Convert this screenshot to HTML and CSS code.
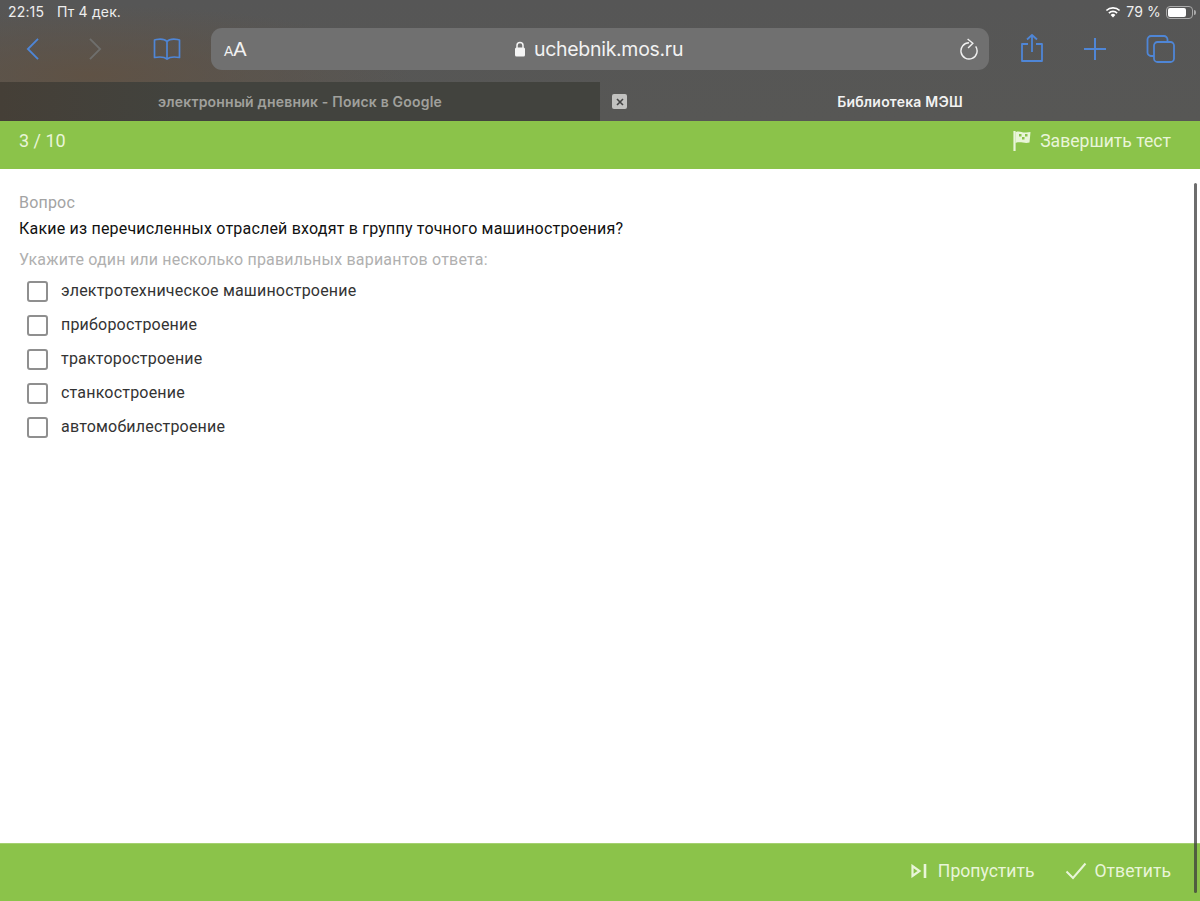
FILE: index.html
```html
<!DOCTYPE html>
<html lang="ru">
<head>
<meta charset="utf-8">
<title>Библиотека МЭШ</title>
<link rel="stylesheet" href="styles.css">
</head>
<body>
<header class="chrome">
  <div class="status">
    <div class="status-left"><span>22:15</span><span>Пт 4 дек.</span></div>
    <div class="status-right">
      <svg class="wifi" viewBox="0 0 16 12"><path d="M8 11.5 5.6 8.9a3.4 3.4 0 0 1 4.8 0z" fill="#fff"/><path d="M3.9 7.1a5.8 5.8 0 0 1 8.2 0M1.4 4.5a9.4 9.4 0 0 1 13.2 0" fill="none" stroke="#fff" stroke-width="1.7"/></svg>
      <span>79 %</span>
      <span class="battery"><span class="battery-fill"></span></span>
      <span class="battery-tip"></span>
    </div>
  </div>
  <div class="toolbar">
    <div class="nav-group">
      <svg class="ic back" viewBox="0 0 16 26"><path d="M14 2 3 13l11 11" fill="none" stroke="#4f86d6" stroke-width="2"/></svg>
      <svg class="ic forward" viewBox="0 0 16 26"><path d="M2 2l11 11L2 24" fill="none" stroke="#6f6f6d" stroke-width="2"/></svg>
      <svg class="ic book" viewBox="0 0 28 24"><path d="M14 4.5C12 2.3 8 1.8 3.5 2.5L1.500 3v17.500c5-.8 10-.6 12.500 1.500 2.500-2.100 7.500-2.300 12.500-1.500V3l-2-.5C20 1.800 16 2.300 14 4.500zm0 0V22" fill="none" stroke="#4f86d6" stroke-width="1.700" stroke-linejoin="round"/></svg>
    </div>
    <div class="address">
      <span class="aa"><small>A</small>A</span>
      <span class="url">
        <svg class="lock" viewBox="0 0 12 16"><path d="M3 7V4.500a3 3 0 0 1 6 0V7" fill="none" stroke="#f4f4f4" stroke-width="1.500"/><rect x="1" y="6.500" width="10" height="9" rx="1.500" fill="#f4f4f4"/></svg>
        uchebnik.mos.ru
      </span>
      <svg class="reload" viewBox="0 0 20 24"><path d="M9.500 5.500A8.500 8.500 0 1 0 16.500 9.200" fill="none" stroke="#f0f0f0" stroke-width="1.500"/><path d="M8 1.500 13.500 6 8.500 11" fill="none" stroke="#f0f0f0" stroke-width="1.500"/></svg>
    </div>
    <div class="action-group">
      <svg class="ic share" viewBox="0 0 24 30"><path d="M8 11H2v17h20V11h-6M12 19V2M7 6.500 12 2l5 4.500" fill="none" stroke="#4f86d6" stroke-width="1.800" stroke-linejoin="round"/></svg>
      <svg class="ic plus" viewBox="0 0 22 22"><path d="M11 0v22M0 11h22" stroke="#4f86d6" stroke-width="2"/></svg>
      <svg class="ic tabs" viewBox="0 0 29 28"><rect x="8" y="7" width="20" height="20" rx="3.500" fill="none" stroke="#4f86d6" stroke-width="1.800"/><path d="M8 21H5a3.500 3.500 0 0 1-3.500-3.500v-13A3.500 3.500 0 0 1 5 1h13a3.500 3.500 0 0 1 3.500 3.500V7" fill="none" stroke="#4f86d6" stroke-width="1.800"/></svg>
    </div>
  </div>
  <div class="tabstrip">
    <div class="tab tab-off">электронный дневник - Поиск в Google</div>
    <div class="tab tab-on">
      <span class="close"><svg viewBox="0 0 8 8"><path d="M1 1l6 6M7 1 1 7" stroke="#444" stroke-width="1.600"/></svg></span>
      Библиотека МЭШ
    </div>
  </div>
</header>
<div class="page-bar">
  <span>3 / 10</span>
  <span class="bar-btn">
    <svg class="flag" viewBox="0 0 18 22"><path d="M1.500 1v20" stroke="#e9f5d9" stroke-width="2.200"/><path d="M2.500 2c5-1.500 6 1 10.500.5l4.500-.5-1 10.500c-5 1.500-9-1.500-14 .5z" fill="#e9f5d9"/><path d="M6 4h2.500v2.500H6zM12 4h2.500v2.500H12zM9 7h2.500v2.500H9z" fill="#8bc34a"/></svg>
    Завершить тест
  </span>
</div>
<main class="content">
  <div class="hint-top">Вопрос</div>
  <div class="question">Какие из перечисленных отраслей входят в группу точного машиностроения?</div>
  <div class="hint">Укажите один или несколько правильных вариантов ответа:</div>
  <ul class="options">
    <li><span class="box"></span>электротехническое машиностроение</li>
    <li><span class="box"></span>приборостроение</li>
    <li><span class="box"></span>тракторостроение</li>
    <li><span class="box"></span>станкостроение</li>
    <li><span class="box"></span>автомобилестроение</li>
  </ul>
  <div class="scrollbar"></div>
</main>
<footer class="page-foot">
  <span class="bar-btn">
    <svg class="skip" viewBox="0 0 16 14"><path d="M1.500 2v10l7-5z" fill="none" stroke="#e9f5d9" stroke-width="2.200"/><path d="M14 0v14" stroke="#e9f5d9" stroke-width="2.600"/></svg>
    Пропустить
  </span>
  <span class="bar-btn">
    <svg class="check" viewBox="0 0 22 18"><path d="M1.500 9.500 8 16 20.500 1.500" fill="none" stroke="#e9f5d9" stroke-width="2"/></svg>
    Ответить
  </span>
</footer>
</body>
</html>
```

FILE: styles.css
```css
* { box-sizing: border-box; }
html, body { margin: 0; height: 100%; }
body {
  width: 1200px;
  height: 901px;
  overflow: hidden;
  display: flex;
  flex-direction: column;
  background: #fff;
  font-family: Roboto, "Liberation Sans", sans-serif;
}
.chrome {
  height: 121px;
  background: radial-gradient(ellipse 320px 70px at 90px 75px, #5f5245, rgba(87, 87, 87, 0)), linear-gradient(180deg, #565656, #575755);
  display: flex;
  flex-direction: column;
  flex: none;
}
.status {
  height: 28px;
  padding: 2px 4px 0 8px;
  display: flex;
  justify-content: space-between;
  align-items: flex-start;
  color: #eee;
  font: 14px/20px Inter, "Liberation Sans", sans-serif;
  letter-spacing: .15px;
}
.status-left { display: flex; gap: 13px; }
.status-right { display: flex; align-items: center; gap: 5px; }
.wifi { width: 16px; height: 12px; }
.battery {
  width: 27px;
  height: 13px;
  border: 1px solid #aaa;
  border-radius: 4px;
  padding: 1px;
  display: block;
}
.battery-fill { display: block; width: 79%; height: 100%; background: #fff; border-radius: 2px; }
.battery-tip { width: 2px; height: 5px; background: #aaa; margin-left: -4px; border-radius: 0 2px 2px 0; }
.toolbar {
  height: 42px;
  padding: 0 0 0 25px;
  display: flex;
  align-items: center;
}
.nav-group { display: flex; align-items: center; width: 186px; }
.ic { display: block; flex: none; }
.back { width: 15px; height: 24px; }
.forward { width: 15px; height: 24px; margin-left: 48px; }
.book { width: 28px; height: 24px; margin-left: 50px; }
.address {
  width: 778px;
  height: 42px;
  background: #707070;
  border-radius: 11px;
  display: flex;
  align-items: center;
  position: relative;
  padding: 0 10px 0 13px;
  color: #f2f2f2;
  justify-content: space-between;
}
.aa { font: 20px/1 "Liberation Sans", sans-serif; }
.aa small { font-size: 14px; }
.url {
  position: absolute;
  left: 303px;
  top: 1px;
  height: 42px;
  display: flex;
  align-items: center;
  gap: 8px;
  font: 19.5px/1 Inter, "Liberation Sans", sans-serif;
  letter-spacing: -.3px;
}
.lock { width: 12px; height: 16px; margin-top: -2px; }
.reload { width: 19px; height: 24px; }
.action-group { display: flex; align-items: center; }
.share { width: 24px; height: 30px; margin-left: 31px; margin-top: -3px; }
.plus { width: 22px; height: 22px; margin-left: 40px; }
.tabs { width: 29px; height: 28px; margin-left: 40px; }
.tabstrip {
  margin-top: 12px;
  height: 39px;
  display: flex;
  font: 600 14px/39px Inter, "Liberation Sans", sans-serif;
  letter-spacing: .2px;
}
.tab { width: 600px; text-align: center; position: relative; }
.tab-off { color: #a0a09c; background: linear-gradient(90deg, #453f37, #42433e 30%); }
.tab-on { color: #f2f2f2; }
.close {
  position: absolute;
  left: 12px;
  top: 12px;
  width: 15px;
  height: 15px;
  background: #c2c2c0;
  border-radius: 2px;
  display: flex;
  align-items: center;
  justify-content: center;
}
.close svg { width: 8px; height: 8px; }
.page-bar, .page-foot {
  background: #8bc34a;
  color: #e9f5d9;
  font-size: 17.6px;
  display: flex;
  align-items: center;
  flex: none;
}
.page-bar {
  height: 48px;
  padding: 0 29px 9px 19px;
  justify-content: space-between;
}
.page-bar > span:first-child { font-size: 18px; }
.page-foot {
  height: 58px;
  padding: 0 29px 4px 0;
  justify-content: flex-end;
  gap: 30px;
  border-top: 1px solid #a5d070;
}
.bar-btn { display: flex; align-items: center; gap: 8px; }
.flag { width: 18px; height: 22px; margin-right: 1px; }
.skip { width: 16px; height: 14px; margin-right: 3px; }
.check { width: 22px; height: 18px; }
.content {
  flex: 1;
  position: relative;
  padding: 24px 19px 0;
  font-size: 16px;
  line-height: 20px;
  letter-spacing: .2px;
}
.hint-top { color: #a3a3a3; height: 20px; }
.question { color: #111; margin-top: 6px; }
.hint { color: #b0b0b0; margin-top: 11px; }
.options { list-style: none; margin: 11px 0 0; padding: 0 0 0 8px; color: #333; }
.options li { height: 34px; display: flex; align-items: flex-start; gap: 13px; }
.box {
  width: 21px;
  height: 21px;
  border: 2px solid #8f8f8f;
  border-radius: 3px;
  background: #fff;
  flex: none;
}
.scrollbar {
  position: absolute;
  right: 3px;
  top: 14px;
  bottom: -50px;
  width: 3px;
  border-radius: 2px;
  background: rgba(60, 60, 60, .75);
  z-index: 2;
}
```
